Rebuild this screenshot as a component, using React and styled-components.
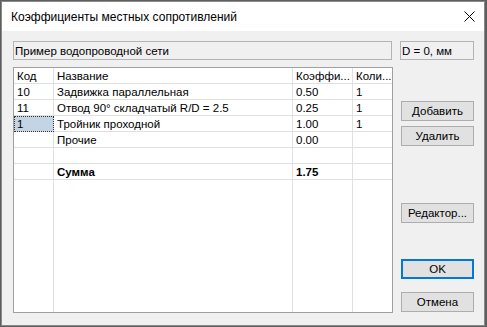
import React from "react";
import styled, { createGlobalStyle } from "styled-components";

const Global = createGlobalStyle`
  html, body { margin: 0; padding: 0; background: #5e5e5e; }
  body { font-family: "Liberation Sans", Arial, sans-serif; font-size: 11.5px; color: #000; }
  * { box-sizing: border-box; }
`;

const Desktop = styled.div`
  width: 487px;
  height: 327px;
  padding: 1px;
  overflow: hidden;
`;

const Window = styled.div`
  width: 484px;
  height: 325px;
  border: 1px solid #8a8a8a;
  background: #f0f0f0;
  display: flex;
  flex-direction: column;
`;

const TitleBar = styled.div`
  height: 29px;
  flex: none;
  background: #fff;
  display: flex;
  align-items: center;
  padding-left: 9px;
  padding-right: 9px;
  font-size: 12px;
`;

const Title = styled.div`
  flex: 1;
  padding-top: 1px;
`;

const CloseIcon = styled.svg`
  width: 11px;
  height: 11px;
  display: block;
`;

const Body = styled.div`
  flex: 1;
  padding: 10px 10px 0 11px;
  display: flex;
  flex-direction: column;
`;

const TopRow = styled.div`
  display: flex;
  gap: 8px;
`;

const Field = styled.div`
  width: ${(p) => p.$w}px;
  height: 19px;
  border: 1px solid #b4b4b4;
  background: #f0f0f0;
  padding-left: 1px;
  display: flex;
  align-items: center;
  white-space: nowrap;
  overflow: hidden;
`;

const MainRow = styled.div`
  display: flex;
  margin-top: 7px;
  height: 246px;
`;

const Table = styled.div`
  width: 380px;
  height: 100%;
  border: 1px solid #a0a0a0;
  background: #fff;
  display: grid;
  grid-template-columns: 40px 239px 60px 39px;
  grid-template-rows: repeat(7, 16px) 1fr;
`;

const Cell = styled.div`
  border-right: ${(p) => (p.$last ? "none" : "1px solid #e0e0e0")};
  border-bottom: ${(p) => (p.$filler ? "none" : "1px solid #e0e0e0")};
  padding-left: 3px;
  display: flex;
  align-items: center;
  white-space: nowrap;
  overflow: hidden;
  font-weight: ${(p) => (p.$bold ? 700 : 400)};
  background: ${(p) => (p.$selected ? "#c3d5e5" : "transparent")};
  outline: ${(p) => (p.$selected ? "1px dotted #333" : "none")};
  outline-offset: -1px;
`;

const Side = styled.div`
  margin-left: 8px;
  width: 73px;
  display: flex;
  flex-direction: column;
`;

const Button = styled.button`
  width: 73px;
  height: 20px;
  margin-top: ${(p) => p.$mt}px;
  border: ${(p) => (p.$default ? "2px solid #0078d7" : "1px solid #adadad")};
  background: #e1e1e1;
  font-family: inherit;
  font-size: 11.5px;
  color: #000;
  padding: 0;
  display: flex;
  align-items: center;
  justify-content: center;
`;

const columns = ["Код", "Название", "Коэффи...", "Коли..."];
const rows = [
  { c: ["10", "Задвижка параллельная", "0.50", "1"] },
  { c: ["11", "Отвод 90° складчатый R/D = 2.5", "0.25", "1"] },
  { c: ["1", "Тройник проходной", "1.00", "1"], sel: 0 },
  { c: ["", "Прочие", "0.00", ""] },
  { c: ["", "", "", ""] },
  { c: ["", "Сумма", "1.75", ""], bold: true },
];

export default function App() {
  return (
    <Desktop>
      <Global />
      <Window>
        <TitleBar>
          <Title>Коэффициенты местных сопротивлений</Title>
          <CloseIcon viewBox="0 0 11 11">
            <path d="M0.5 0.5 L10.5 10.5 M10.5 0.5 L0.5 10.5" stroke="#000" strokeWidth="1" />
          </CloseIcon>
        </TitleBar>
        <Body>
          <TopRow>
            <Field $w={379}>Пример водопроводной сети</Field>
            <Field $w={74}>D = 0, мм</Field>
          </TopRow>
          <MainRow>
            <Table>
              {columns.map((h, i) => (
                <Cell key={"h" + i} $last={i === 3}>{h}</Cell>
              ))}
              {rows.map((r, ri) =>
                r.c.map((v, ci) => (
                  <Cell
                    key={ri + "-" + ci}
                    $last={ci === 3}
                    $bold={r.bold}
                    $selected={r.sel === ci}
                  >
                    {v}
                  </Cell>
                ))
              )}
              {columns.map((_, i) => (
                <Cell key={"f" + i} $last={i === 3} $filler />
              ))}
            </Table>
            <Side>
              <Button $mt={34}>Добавить</Button>
              <Button $mt={5}>Удалить</Button>
              <Button $mt={57}>Редактор...</Button>
              <Button $mt={36} $default>OK</Button>
              <Button $mt={13}>Отмена</Button>
            </Side>
          </MainRow>
        </Body>
      </Window>
    </Desktop>
  );
}
